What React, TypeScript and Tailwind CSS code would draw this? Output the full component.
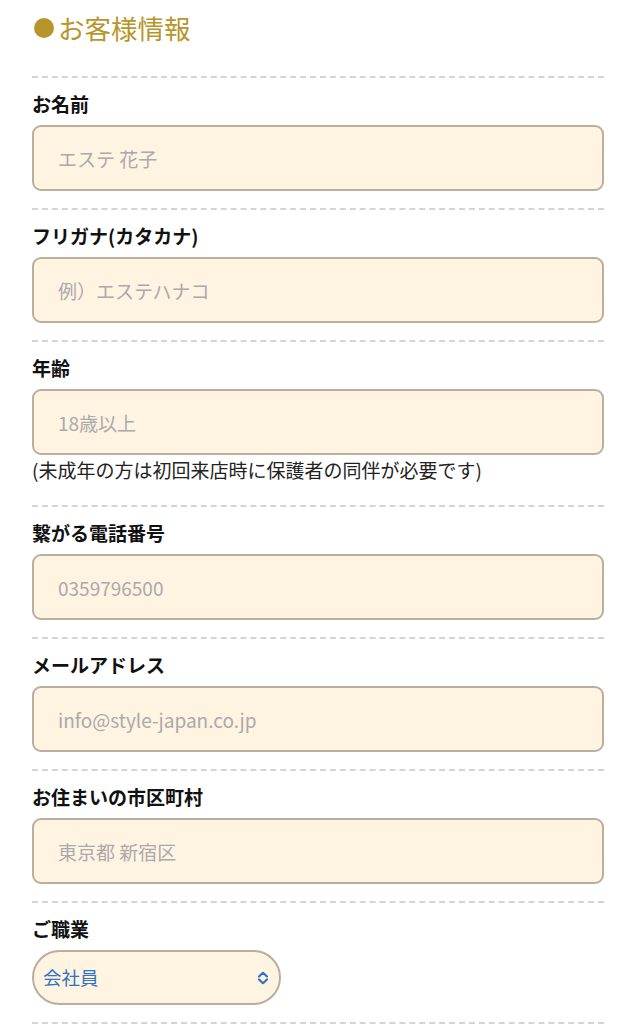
const font = { fontFamily: '"Noto Sans CJK JP", "Noto Sans", sans-serif' };

type Field = {
  label: string;
  placeholder: string;
  note?: string;
};

const fields: Field[] = [
  { label: "お名前", placeholder: "エステ 花子" },
  { label: "フリガナ(カタカナ)", placeholder: "例）エステハナコ" },
  { label: "年齢", placeholder: "18歳以上", note: "(未成年の方は初回来店時に保護者の同伴が必要です)" },
  { label: "繋がる電話番号", placeholder: "0359796500" },
  { label: "メールアドレス", placeholder: "info@style-japan.co.jp" },
  { label: "お住まいの市区町村", placeholder: "東京都 新宿区" },
];

function Divider() {
  return <div className="border-t-2 border-dashed border-[#d4d4d4]" />;
}

export default function App() {
  return (
    <div className="min-h-screen bg-white px-8" style={font}>
      <h2 className="flex items-center gap-1 pt-[10px] pb-[30px] text-[26.5px] leading-[36px] text-[#b8952b] font-normal">
        <span className="inline-block w-5 h-5 rounded-full bg-[#b8952b] ml-[2px]" />
        お客様情報
      </h2>

      {fields.map((f) => (
        <div key={f.label}>
          <Divider />
          <div className={f.note ? "pt-[13px] pb-[22px]" : "pt-[13px] pb-[17px]"}>
            <label className="block text-[19px] leading-[26px] font-bold text-[#111] mb-[8px]">
              {f.label}
            </label>
            <input
              placeholder={f.placeholder}
              className="block w-full h-[66px] rounded-[9px] border-2 border-[#bcae9c] bg-[#fff3e2] px-6 text-[19px] text-[#333] placeholder:text-[#aaaaaa] outline-none"
              style={font}
            />
            {f.note && (
              <p className="mt-[2px] text-[19px] leading-[26px] text-[#222]">{f.note}</p>
            )}
          </div>
        </div>
      ))}

      <Divider />
      <div className="pt-[13px] pb-[17px]">
        <label className="block text-[19px] leading-[26px] font-bold text-[#111] mb-[8px]">
          ご職業
        </label>
        <div className="relative w-[249px]">
          <select
            className="block w-full h-[55px] appearance-none rounded-full border-2 border-[#bcae9c] bg-[#fff3e2] pl-[9px] pr-10 text-[18.5px] text-[#2e73c4] outline-none"
            style={font}
            defaultValue="会社員"
          >
            <option>会社員</option>
            <option>自営業</option>
            <option>学生</option>
            <option>その他</option>
          </select>
          <svg
            className="pointer-events-none absolute right-[12px] top-1/2 -translate-y-1/2"
            width="12"
            height="14"
            viewBox="0 0 12 14"
            fill="none"
            stroke="#2e73c4"
            strokeWidth="2.2"
            strokeLinecap="round"
            strokeLinejoin="round"
          >
            <path d="M2 5.5 L6 1.8 L10 5.5" />
            <path d="M2 8.5 L6 12.2 L10 8.5" />
          </svg>
        </div>
      </div>
      <Divider />
    </div>
  );
}
